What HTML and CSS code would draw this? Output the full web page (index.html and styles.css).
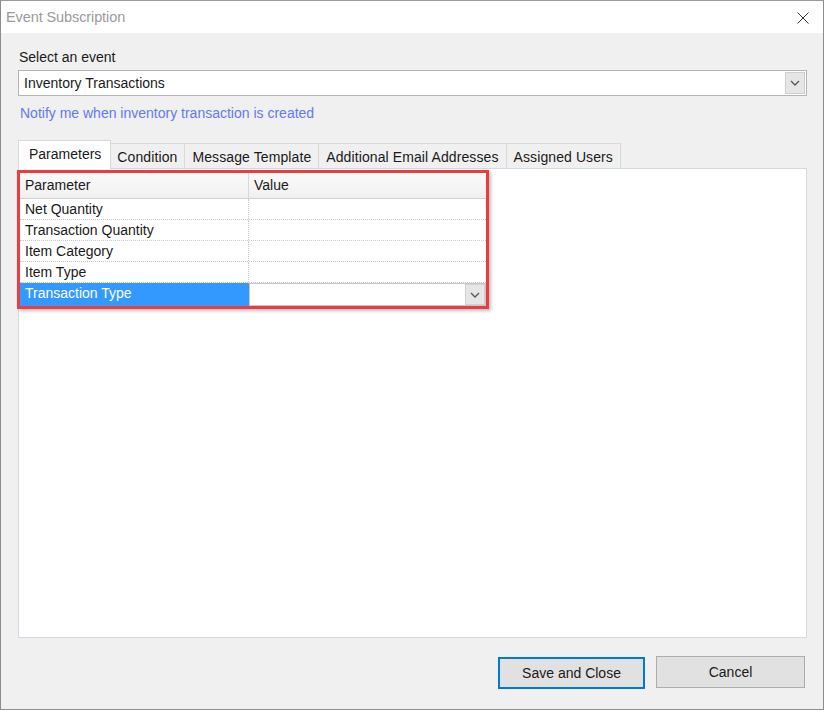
FILE: index.html
```html
<!DOCTYPE html>
<html>
<head>
<meta charset="utf-8">
<link rel="stylesheet" href="styles.css">
</head>
<body>
<div class="window">
  <div class="titlebar">
    <span class="title">Event Subscription</span>
    <svg class="close" width="12" height="12" viewBox="0 0 12 12"><path d="M0.5 0.5L11.5 11.5M11.5 0.5L0.5 11.5" stroke="#333" stroke-width="1" fill="none"/></svg>
  </div>
  <div class="content">
    <div class="label">Select an event</div>
    <div class="combo">
      <span class="combo-text">Inventory Transactions</span>
      <span class="drop"><svg width="10" height="6" viewBox="0 0 10 6"><path d="M1 1L5 5L9 1" stroke="#555" stroke-width="1.3" fill="none"/></svg></span>
    </div>
    <div class="link">Notify me when inventory transaction is created</div>
    <div class="tabs">
      <div class="tab active">Parameters</div>
      <div class="tab">Condition</div>
      <div class="tab">Message Template</div>
      <div class="tab">Additional Email Addresses</div>
      <div class="tab">Assigned Users</div>
    </div>
    <div class="panel">
      <div class="grid">
        <div class="row head">
          <div class="cell c1">Parameter</div>
          <div class="cell c2">Value</div>
        </div>
        <div class="row">
          <div class="cell c1">Net Quantity</div>
          <div class="cell c2"></div>
        </div>
        <div class="row">
          <div class="cell c1">Transaction Quantity</div>
          <div class="cell c2"></div>
        </div>
        <div class="row">
          <div class="cell c1">Item Category</div>
          <div class="cell c2"></div>
        </div>
        <div class="row">
          <div class="cell c1">Item Type</div>
          <div class="cell c2"></div>
        </div>
        <div class="row sel">
          <div class="cell c1">Transaction Type</div>
          <div class="cell c2 editor">
            <span class="drop small"><svg width="10" height="6" viewBox="0 0 10 6"><path d="M1 1L5 5L9 1" stroke="#555" stroke-width="1.3" fill="none"/></svg></span>
          </div>
        </div>
      </div>
    </div>
    <div class="buttons">
      <div class="btn primary">Save and Close</div>
      <div class="btn">Cancel</div>
    </div>
  </div>
</div>
</body>
</html>
```
FILE: styles.css
```css
* { box-sizing: border-box; }
html, body { margin: 0; padding: 0; }
body {
  width: 824px;
  height: 710px;
  font-family: "Liberation Sans", Arial, sans-serif;
  font-size: 14px;
  color: #1a1a1a;
  background: #f0f0f0;
}
.window {
  width: 824px;
  height: 710px;
  border: 1px solid #8c8c8c;
  border-top-color: #9a9a9a;
  background: #f0f0f0;
  display: flex;
  flex-direction: column;
}
.titlebar {
  height: 32px;
  background: #fff;
  display: flex;
  align-items: center;
  justify-content: space-between;
  padding: 0 14px 0 5px;
  flex: none;
}
.title {
  color: #9a9a9a;
  font-size: 14.5px;
  letter-spacing: -0.1px;
}
.close { margin-top: 1px; }
.content {
  flex: 1;
  padding: 0 16px 0 17px;
  display: flex;
  flex-direction: column;
}
.label {
  margin-top: 16px;
  line-height: 16px;
  padding-left: 1px;
}
.combo {
  margin-top: 5px;
  height: 26px;
  border: 1px solid #b5b5b5;
  background: #fff;
  display: flex;
  align-items: center;
  justify-content: space-between;
  padding-left: 5px;
}
.drop {
  width: 20px;
  height: 22px;
  margin-right: 1px;
  background: #e6e6e6;
  border: 1px solid #cfcfcf;
  display: flex;
  align-items: center;
  justify-content: center;
}
.link {
  margin-top: 9px;
  line-height: 16px;
  color: #6279ee;
  padding-left: 2px;
}
.tabs {
  margin-top: 19px;
  height: 28px;
  display: flex;
  align-items: flex-end;
  position: relative;
  z-index: 1;
}
.tab {
  height: 25px;
  line-height: 26px;
  padding: 0 7px;
  letter-spacing: 0.1px;
  border: 1px solid #d9d9d9;
  border-bottom: none;
  margin-left: -1px;
  background: #f0f0f0;
  white-space: nowrap;
}
.tab.active {
  height: 29px;
  line-height: 26px;
  margin-left: 0;
  margin-right: -1px;
  padding: 0 9px 0 10px;
  letter-spacing: 0;
  background: #fff;
  border-color: #d9d9d9;
  margin-bottom: -1px;
  z-index: 2;
  position: relative;
}
.panel {
  height: 470px;
  background: #fff;
  border: 1px solid #d3dbe2;
  padding-top: 1px;
  padding-left: 0;
}
.grid {
  width: 472px;
  margin-left: -2px;
  border: 3px solid #ee3b3f;
  box-shadow: 2px 2px 3px rgba(0, 0, 0, 0.25);
  background: #fff;
}
.row {
  display: flex;
  height: 21px;
  border-bottom: 1px dotted #c8c8c8;
}
.row.head {
  height: 26px;
  border-bottom: 1px solid #d0d0d0;
  background: linear-gradient(#fafafa, #f0f0f0);
}
.cell {
  line-height: 20px;
  padding-left: 5px;
  white-space: nowrap;
}
.head .cell { line-height: 24px; }
.c1 {
  width: 229px;
  border-right: 1px dotted #c8c8c8;
}
.head .c1 { border-right: 1px solid #d8d8d8; }
.c2 { flex: 1; }
.row.sel { border-bottom: none; height: 23px; }
.sel .c1 {
  background: #3399ff;
  color: #fff;
  border-right: 1px solid #3399ff;
}
.editor {
  border: 1px solid #c6c6c6;
  display: flex;
  justify-content: flex-end;
  padding: 0;
}
.drop.small {
  width: 20px;
  height: 21px;
  margin: 0;
  border-color: #d2d2d2;
}
.buttons {
  margin-top: 18px;
  display: flex;
  justify-content: flex-end;
  gap: 11px;
  padding-right: 2px;
}
.btn {
  width: 149px;
  height: 32px;
  border: 1px solid #adadad;
  background: #e1e1e1;
  display: flex;
  align-items: center;
  justify-content: center;
}
.btn.primary {
  width: 147px;
  border: 2px solid #0078d7;
  margin-top: 1px;
}
```
